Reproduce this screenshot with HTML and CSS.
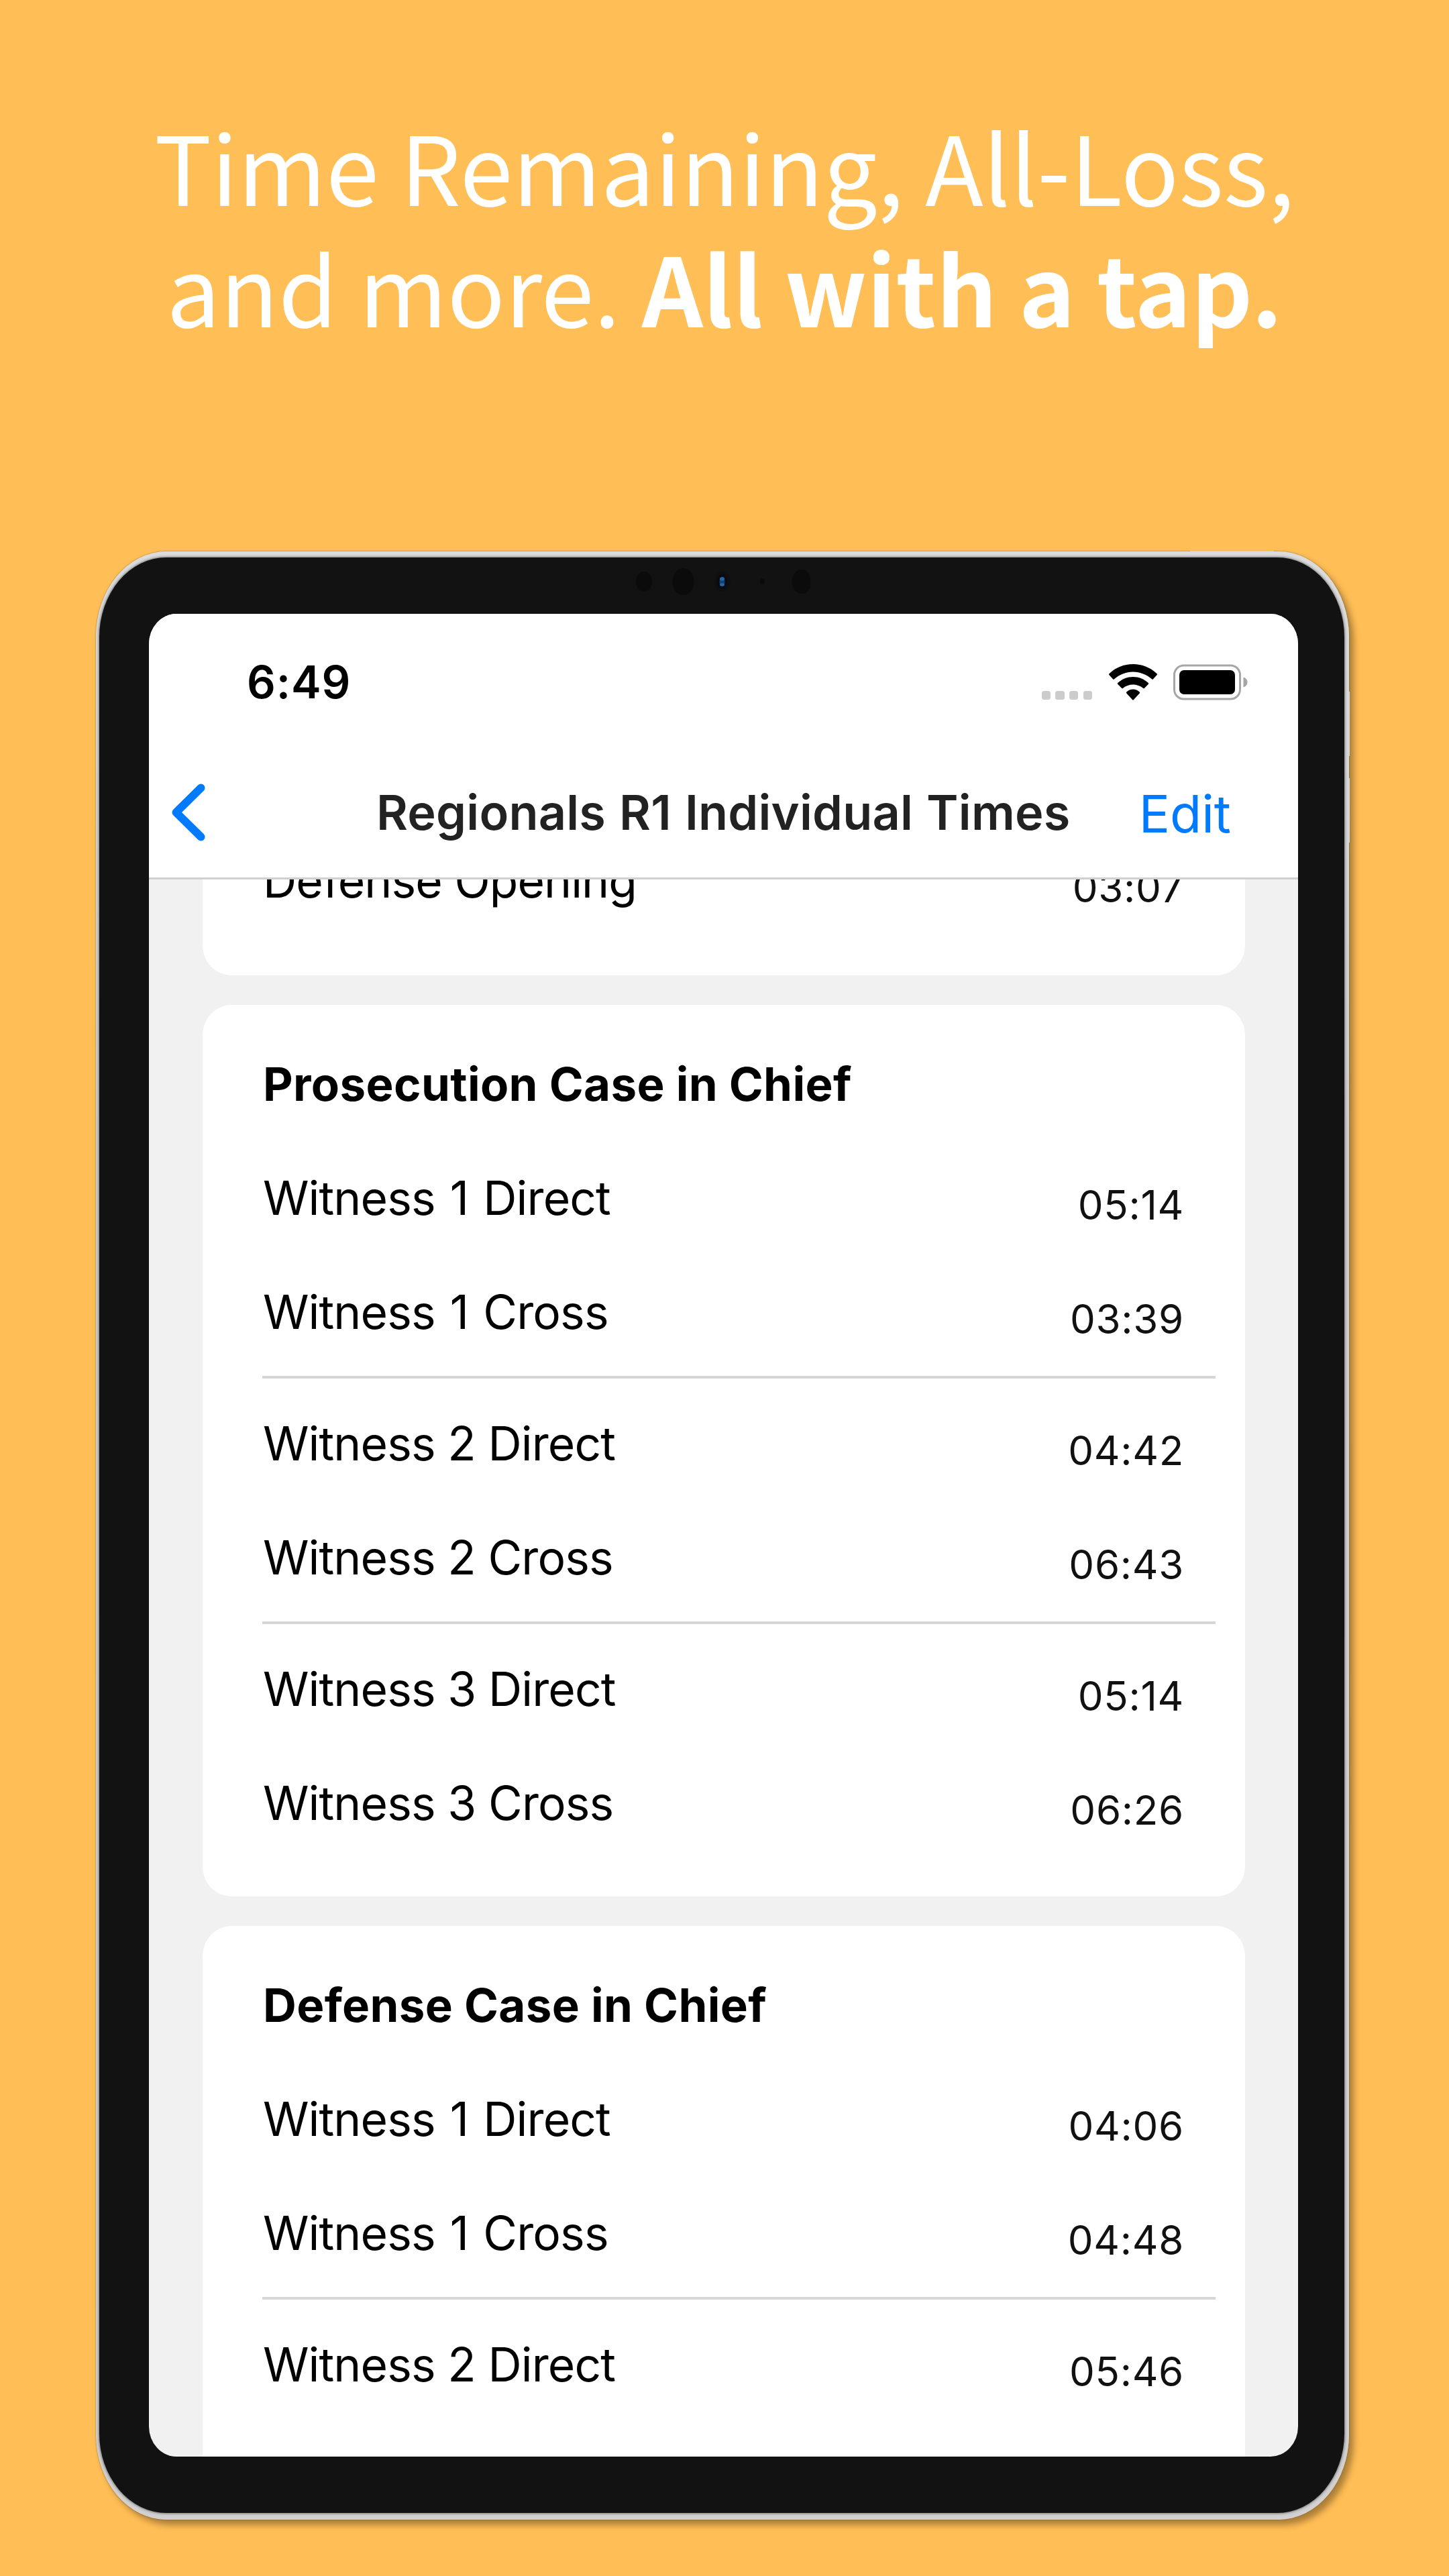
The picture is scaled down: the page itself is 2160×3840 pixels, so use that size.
FILE: index.html
```html
<!DOCTYPE html>
<html lang="en">
<head>
<meta charset="utf-8">
<title>Individual Times</title>
<link rel="stylesheet" href="styles.css">
</head>
<body>
<main class="poster">
  <h1 class="headline">Time Remaining, All-Loss,<br>and more. <strong>All with a tap.</strong></h1>
  <section class="device">
    <i class="button power"></i><i class="button vol-up"></i><i class="button vol-down"></i>
    <div class="bezel">
      <svg class="sensors" viewBox="0 0 260 42" aria-hidden="true">
        <g fill="#0b0b0b"><ellipse cx="12" cy="21" rx="12" ry="15"/><ellipse cx="70.500" cy="21" rx="16" ry="20"/><ellipse cx="188.500" cy="21" rx="3.500" ry="4.500"/><ellipse cx="247" cy="21" rx="14.500" ry="18"/></g>
        <ellipse cx="128.500" cy="21" rx="12" ry="15" fill="#0e0f10"/>
        <ellipse cx="128.500" cy="21" rx="8" ry="11" fill="#090b10"/>
        <ellipse cx="128.500" cy="21" rx="4" ry="7" fill="#123f70"/>
        <ellipse cx="128.500" cy="17" rx="3.500" ry="2.700" fill="#2565a5"/><ellipse cx="128.500" cy="25.500" rx="3.500" ry="2.300" fill="#2565a5"/>
      </svg>
      <div class="screen">
        <header class="top">
          <div class="status">
            <span class="clock">6:49</span>
            <span class="indicators">
              <span class="cell"><i></i><i></i><i></i><i></i></span>
              <svg class="wifi" viewBox="0 0 72 54" aria-hidden="true">
                <path d="M36 0C49.500 0 62 5 71.500 14.200Q72.500 15.200 71.500 16.200L66 22.200Q65 23.200 64 22.200C56.500 15.500 46.500 11.400 36 11.400S15.500 15.500 8 22.200Q7 23.200 6 22.200L.5 16.200Q-.5 15.200 .5 14.200C10 5 22.500 0 36 0Z"/>
                <path d="M36 19C44.500 19 52.500 22.200 58.700 28Q59.700 29 58.700 30L53 35.800Q52 36.800 51 35.800C46.800 32.300 41.600 30.400 36 30.400S25.200 32.300 21 35.800Q20 36.800 19 35.800L13.300 30Q12.300 29 13.300 28C19.500 22.200 27.500 19 36 19Z"/>
                <path d="M36 37.500C39.500 37.500 43 38.900 45.700 41.500Q46.700 42.500 45.700 43.500L37 53Q36 54 35 53L26.300 43.500Q25.300 42.500 26.300 41.500C29 38.900 32.500 37.500 36 37.500Z"/>
              </svg>
              <svg class="battery" viewBox="0 0 111 54" aria-hidden="true">
                <rect x="1.500" y="2" width="98" height="50" rx="14" ry="14" fill="none" stroke="#a6a6a6" stroke-width="3"/>
                <rect x="9" y="9" width="83" height="36" rx="7"/>
                <path d="M104.500 19.500C108 20.500 110.500 23.500 110.500 27S108 33.500 104.500 34.500Z" fill="#a6a6a6"/>
              </svg>
            </span>
          </div>
          <nav class="nav">
            <svg class="back" viewBox="0 0 50 86" aria-hidden="true"><path d="M43.500 6.500L6.500 43L43.500 79.500"/></svg>
            <span class="title">Regionals R1 Individual Times</span>
            <a class="edit">Edit</a>
          </nav>
        </header>
        <div class="list">
          <article class="card opening">
            <div class="row"><span class="name">Defense Opening</span><time>03:07</time></div>
          </article>
          <article class="card">
            <h2>Prosecution Case in Chief</h2>
            <div class="pair first">
              <div class="row"><span class="name">Witness 1 Direct</span><time>05:14</time></div>
              <div class="row"><span class="name">Witness 1 Cross</span><time>03:39</time></div>
            </div>
            <div class="pair">
              <div class="row"><span class="name">Witness 2 Direct</span><time>04:42</time></div>
              <div class="row"><span class="name">Witness 2 Cross</span><time>06:43</time></div>
            </div>
            <div class="pair">
              <div class="row"><span class="name">Witness 3 Direct</span><time>05:14</time></div>
              <div class="row"><span class="name">Witness 3 Cross</span><time>06:26</time></div>
            </div>
          </article>
          <article class="card">
            <h2>Defense Case in Chief</h2>
            <div class="pair first">
              <div class="row"><span class="name">Witness 1 Direct</span><time>04:06</time></div>
              <div class="row"><span class="name">Witness 1 Cross</span><time>04:48</time></div>
            </div>
            <div class="pair">
              <div class="row"><span class="name">Witness 2 Direct</span><time>05:46</time></div>
              <div class="row"></div>
            </div>
          </article>
        </div>
      </div>
    </div>
  </section>
</main>
</body>
</html>
```
FILE: styles.css
```css
* { box-sizing: border-box; }

body {
  margin: 0;
  width: 2160px;
  height: 3840px;
  overflow: hidden;
  background: #ffbe56;
  font-family: Inter, "Liberation Sans", sans-serif;
  color: #000;
}

.poster {
  height: 3840px;
  display: flex;
  flex-direction: column;
  align-items: flex-start;
  padding-left: 143px;
}

.headline {
  width: 1874px;
  height: 822px;
  flex: none;
  margin: 0;
  padding-top: 155px;
  text-align: center;
  white-space: nowrap;
  color: #fff;
  font: 400 142.2px/181px "Noto Sans CJK SC", "Noto Sans", sans-serif;
}
.headline strong { font-weight: 700; }

.device {
  position: relative;
  width: 1868px;
  height: 2934px;
  padding: 9px 7px 10px 5px;
  border-radius: 105px / 127px;
  background: linear-gradient(#dcdcdc, #cfcdcd 30%, #d2d0d0);
  box-shadow: 0 0 2px rgba(90, 80, 60, .8), 7px 8px 10px rgba(70, 50, 20, .45);
}

.button { position: absolute; background: #d5d5d5; }
.power { left: 1631px; top: -1px; width: 125px; height: 2px; }
.vol-up, .vol-down { left: 1867px; width: 2px; height: 96px; }
.vol-up { top: 209px; }
.vol-down { top: 338px; }

.bezel {
  position: relative;
  height: 100%;
  padding: 84px 69px 84px 74px;
  border-radius: 100px / 119px;
  background: #121212;
  box-shadow: 0 0 4px #444;
}

.sensors {
  position: absolute;
  left: 800px;
  top: 15px;
  width: 260px;
  height: 42px;
}

.screen {
  height: 100%;
  display: flex;
  flex-direction: column;
  overflow: hidden;
  border-radius: 41px / 45px;
  background: #f1f1f1;
}

.top {
  flex: none;
  height: 396px;
  border-bottom: 3px solid #d0d0d0;
  background: #fff;
}

.status {
  height: 204px;
  display: flex;
  justify-content: space-between;
  align-items: center;
  padding: 0 75px 0 146px;
}
.clock { font-size: 67px; font-weight: 600; line-height: 80px; letter-spacing: .9px; }
.indicators { display: flex; align-items: flex-start; }
.cell { display: flex; gap: 7.2px; margin: 40px 25px 0 0; }
.cell i { width: 13.4px; height: 13.4px; border-radius: 3.5px; background: #ccc; }
.wifi { width: 72px; height: 54px; margin-right: 24px; }
.battery { width: 111px; height: 54px; }

.nav { height: 184px; display: flex; align-items: center; padding: 0 100px 0 34px; }
.back { width: 50px; height: 86px; fill: none; stroke: #007aff; stroke-width: 12; stroke-linecap: round; stroke-linejoin: round; }
.title { margin-left: 255px; font-size: 72px; font-weight: 600; line-height: 90px; letter-spacing: .22px; word-spacing: 1.6px; color: #222; white-space: nowrap; }
.edit { margin-left: auto; margin-top: 4px; font-size: 77px; line-height: 90px; color: #007aff; }

.list {
  flex: 1;
  min-height: 0;
  overflow: hidden;
  display: flex;
  flex-direction: column;
  gap: 44px;
  padding: 0 79px 0 80px;
}

.card {
  flex: none;
  padding: 33px 44px 54px 89px;
  border-radius: 43px / 45px;
  background: #fff;
}
.opening { margin-top: -83px; padding-top: 0; padding-bottom: 56px; }

h2 {
  height: 170px;
  margin: 0;
  display: flex;
  align-items: center;
  padding-left: 1px;
  font-size: 69px;
  font-weight: 700;
  line-height: 84px;
  letter-spacing: .36px;
}

.pair + .pair { margin-top: 10px; padding-top: 12px; border-top: 4px solid #d6d6d6; }

.row {
  height: 170px;
  display: flex;
  align-items: center;
  justify-content: space-between;
  padding: 0 47px 0 1px;
}
.name { font-size: 69.5px; line-height: 84px; letter-spacing: -.9px; }
.first .name { word-spacing: 3.5px; }
time { margin-top: 20px; font-size: 60px; line-height: 72px; letter-spacing: .7px; color: #111; }
```
